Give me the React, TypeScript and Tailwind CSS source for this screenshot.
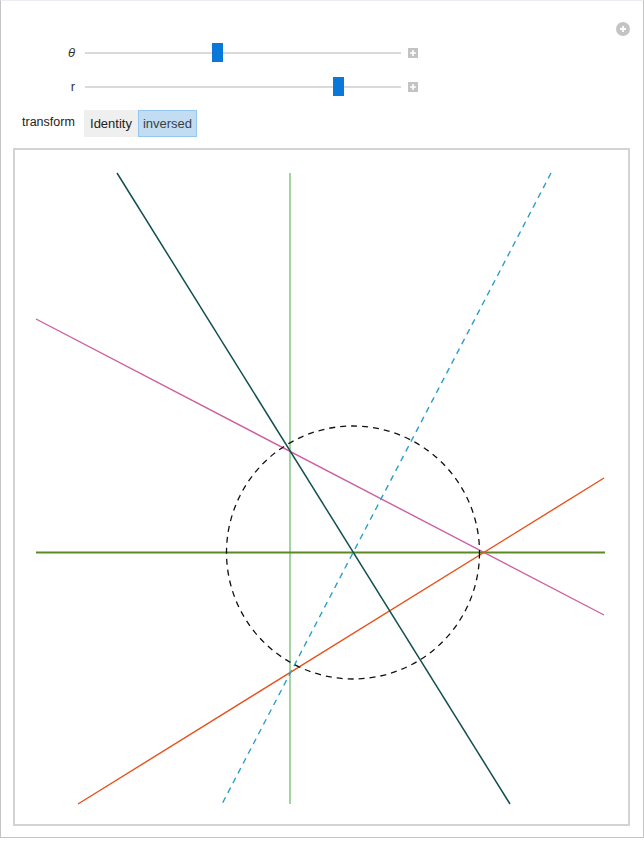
import React from "react";

const font = { fontFamily: '"Liberation Sans", Arial, sans-serif' };

function PlusBox() {
  return (
    <svg width="10" height="10" viewBox="0 0 10 10" className="block">
      <rect width="10" height="10" fill="#c3c3c3" />
      <path d="M5 2v6M2 5h6" stroke="#fff" strokeWidth="1.6" />
    </svg>
  );
}

function SliderRow({ label, italic, thumb }: { label: string; italic?: boolean; thumb: number }) {
  return (
    <div className="flex items-center h-[20px]">
      <div className={`w-[78px] pr-[4px] text-right text-[13px] text-[#333] ${italic ? "italic" : ""}`}>{label}</div>
      <div className="relative w-[316px] h-[20px] ml-[6px]">
        <div className="absolute left-0 right-0 top-[9px] h-[2px] bg-[#dadada]" />
        <div className="absolute top-0 w-[11px] h-[19px] bg-[#0a78d8]" style={{ left: thumb }} />
      </div>
      <div className="ml-[7px]">
        <PlusBox />
      </div>
    </div>
  );
}

function Plot() {
  return (
    <svg width="613" height="674" viewBox="15 150 613 674" className="block">
      <line x1="290" y1="173" x2="290" y2="804" stroke="#8cc98a" strokeWidth="1.6" />
      <line x1="36" y1="552.5" x2="605" y2="552.5" stroke="#5b8a23" strokeWidth="2" />
      <line x1="36" y1="319" x2="604" y2="615" stroke="#cc5fa0" strokeWidth="1.4" />
      <line x1="78" y1="804" x2="604" y2="478" stroke="#e5531a" strokeWidth="1.4" />
      <line x1="117" y1="173" x2="510" y2="804" stroke="#124f50" strokeWidth="1.5" />
      <line x1="551" y1="173" x2="222" y2="804" stroke="#2b9fc9" strokeWidth="1.4" strokeDasharray="6 5" />
      <circle cx="353" cy="552.5" r="126.5" fill="none" stroke="#111" strokeWidth="1.3" strokeDasharray="6 5" />
    </svg>
  );
}

export default function App() {
  return (
    <div className="w-[644px] h-[842px] bg-white" style={font}>
      <div className="relative w-[644px] h-[838px] border border-[#c4c4c4] border-t-[#ececf2] bg-white">
        {/* corner options button */}
        <div className="absolute right-[13px] top-[21px] w-[14px] h-[14px] rounded-full bg-[#c4c4c4] flex items-center justify-center">
          <svg width="8" height="8" viewBox="0 0 8 8">
            <path d="M4 1v6M1 4h6" stroke="#fff" strokeWidth="1.8" />
          </svg>
        </div>

        <div className="pt-[42px] flex flex-col">
          <SliderRow label="θ" italic thumb={127} />
          <div className="mt-[14px]">
            <SliderRow label="r" thumb={248} />
          </div>
          <div className="mt-[13px] flex items-center h-[27px]">
            <div className="w-[83px] pl-[21px] text-[12.5px] text-[#222] -mt-[2px]">transform</div>
            <div className="flex h-[27px]">
              <div className="w-[54px] bg-[#efefef] flex items-center justify-center text-[13px] text-[#222]">Identity</div>
              <div className="w-[59px] bg-[#c2dcf2] border border-[#95c6ef] flex items-center justify-center text-[13px] text-[#3a3f48]">inversed</div>
            </div>
          </div>
          <div className="mt-[11px] ml-[12px] w-[617px] h-[678px] border-2 border-[#d3d3d3] bg-white">
            <Plot />
          </div>
        </div>
      </div>
    </div>
  );
}
